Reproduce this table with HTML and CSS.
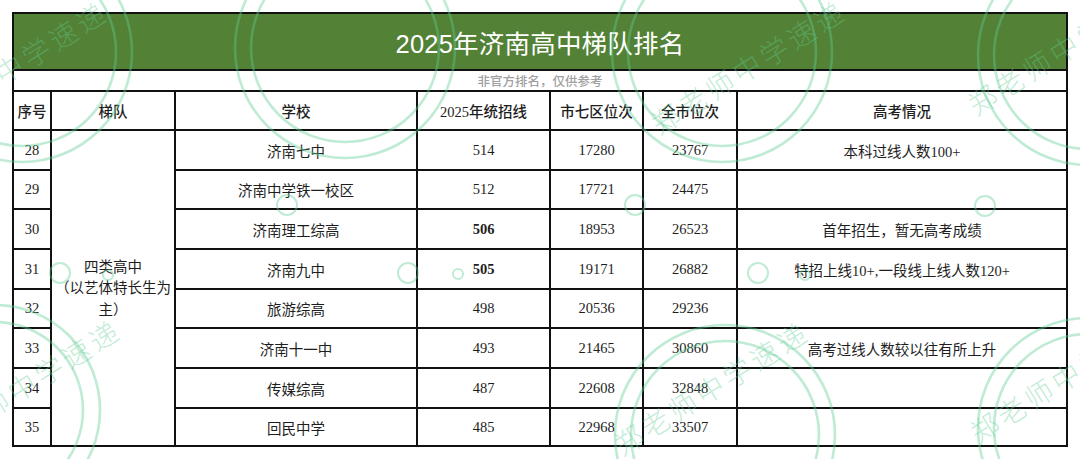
FILE: index.html
```html
<!DOCTYPE html>
<html lang="zh-CN">
<head>
<meta charset="utf-8">
<title>2025年济南高中梯队排名</title>
<link rel="stylesheet" href="styles.css">
</head>
<body>
<div class="page">
  <div class="sheet">
    <div class="title">2025年济南高中梯队排名</div>
    <div class="note">非官方排名，仅供参考</div>

    <div class="cell head">序号</div>
    <div class="cell head">梯队</div>
    <div class="cell head">学校</div>
    <div class="cell head">2025年统招线</div>
    <div class="cell head">市七区位次</div>
    <div class="cell head">全市位次</div>
    <div class="cell head">高考情况</div>

    <div class="cell">28</div>
    <div class="cell tier">四类高中<br>（以艺体特长生为主）</div>
    <div class="cell">济南七中</div>
    <div class="cell">514</div>
    <div class="cell">17280</div>
    <div class="cell">23767</div>
    <div class="cell">本科过线人数100+</div>

    <div class="cell">29</div>
    <div class="cell">济南中学铁一校区</div>
    <div class="cell">512</div>
    <div class="cell">17721</div>
    <div class="cell">24475</div>
    <div class="cell"></div>

    <div class="cell">30</div>
    <div class="cell">济南理工综高</div>
    <div class="cell strong">506</div>
    <div class="cell">18953</div>
    <div class="cell">26523</div>
    <div class="cell">首年招生，暂无高考成绩</div>

    <div class="cell">31</div>
    <div class="cell">济南九中</div>
    <div class="cell strong">505</div>
    <div class="cell">19171</div>
    <div class="cell">26882</div>
    <div class="cell">特招上线10+,一段线上线人数120+</div>

    <div class="cell">32</div>
    <div class="cell">旅游综高</div>
    <div class="cell">498</div>
    <div class="cell">20536</div>
    <div class="cell">29236</div>
    <div class="cell"></div>

    <div class="cell">33</div>
    <div class="cell">济南十一中</div>
    <div class="cell">493</div>
    <div class="cell">21465</div>
    <div class="cell">30860</div>
    <div class="cell">高考过线人数较以往有所上升</div>

    <div class="cell">34</div>
    <div class="cell">传媒综高</div>
    <div class="cell">487</div>
    <div class="cell">22608</div>
    <div class="cell">32848</div>
    <div class="cell"></div>

    <div class="cell">35</div>
    <div class="cell">回民中学</div>
    <div class="cell">485</div>
    <div class="cell">22968</div>
    <div class="cell">33507</div>
    <div class="cell"></div>
  </div>

  <svg class="watermark" width="1080" height="459" viewBox="0 0 1080 459" aria-hidden="true">
    <g class="rings">
      <circle cx="22" cy="52" r="110"/><circle cx="22" cy="52" r="94"/>
      <circle cx="345" cy="48" r="110"/><circle cx="345" cy="48" r="94"/>
      <circle cx="722" cy="52" r="110"/><circle cx="722" cy="52" r="94"/>
      <circle cx="1088" cy="55" r="110"/><circle cx="1088" cy="55" r="94"/>
      <circle cx="-5" cy="410" r="105"/><circle cx="-5" cy="410" r="88"/>
      <circle cx="725" cy="435" r="110"/><circle cx="725" cy="435" r="94"/>
      <circle cx="1088" cy="428" r="110"/><circle cx="1088" cy="428" r="94"/>
      <circle class="dot" cx="60" cy="273" r="10"/><circle class="dot" cx="108" cy="275" r="5"/>
      <circle class="dot" cx="408" cy="273" r="10"/><circle class="dot" cx="458" cy="274" r="5"/>
      <circle class="dot" cx="758" cy="273" r="10"/><circle class="dot" cx="805" cy="275" r="5"/>
      <circle class="dot" cx="287" cy="205" r="10"/>
      <circle class="dot" cx="635" cy="205" r="10"/>
      <circle class="dot" cx="985" cy="206" r="10"/>
    </g>
    <g class="marks">
      <text transform="translate(10 67) rotate(-32)">郑老师中学速递</text>
      <text transform="translate(748 66) rotate(-32)">郑老师中学速递</text>
      <text transform="translate(1065 47) rotate(-32)">郑老师中学速递</text>
      <text transform="translate(23 385) rotate(-32)">郑老师中学速递</text>
      <text transform="translate(711 387) rotate(-32)">郑老师中学速递</text>
      <text transform="translate(1067 375) rotate(-32)">郑老师中学速递</text>
    </g>
  </svg>
</div>
</body>
</html>
```

FILE: styles.css
```css
html, body {
  margin: 0;
  padding: 0;
  background: #fff;
}

.page {
  position: relative;
  width: 1080px;
  height: 459px;
  box-sizing: border-box;
  padding: 12px 0 0 12px;
  overflow: hidden;
  font-family: "Liberation Serif", "Noto Sans CJK SC", serif;
  color: #1e1e1e;
}

.sheet {
  display: grid;
  width: max-content;
  grid-template-columns: 36px 122px 240px 131px 91px 92px 328px;
  grid-template-rows: 55px 19px 37px 38px 37px 38px 38px 37px 38px 38px 36px;
  gap: 2px;
  padding: 2px;
  background: #111;
}

.title {
  grid-column: 1 / -1;
  background: #538135;
  color: #fff;
  display: flex;
  align-items: center;
  justify-content: center;
  font-family: "Liberation Sans", "Noto Sans CJK SC", sans-serif;
  font-size: 25.5px;
  letter-spacing: 0.2px;
}

.note {
  grid-column: 1 / -1;
  background: #fff;
  color: #a0a0a0;
  display: flex;
  align-items: center;
  justify-content: center;
  font-family: "Noto Sans CJK SC", sans-serif;
  font-size: 12.5px;
  font-weight: 500;
}

.cell {
  background: #fff;
  display: flex;
  align-items: center;
  justify-content: center;
  text-align: center;
  font-size: 14.5px;
  white-space: nowrap;
}

.head {
  font-weight: 500;
}

.strong {
  font-weight: bold;
}

.tier {
  grid-row: span 8;
  white-space: normal;
  line-height: 21.5px;
  padding-top: 2px;
}

.watermark {
  position: absolute;
  top: 0;
  left: 0;
  pointer-events: none;
}

.rings circle {
  fill: none;
  stroke: rgba(96, 205, 148, 0.4);
  stroke-width: 2.6;
}

.rings .dot {
  stroke-width: 2;
}

.marks text {
  fill: rgba(96, 205, 148, 0.4);
  font-family: "Noto Sans CJK SC", sans-serif;
  font-weight: 300;
  font-size: 28px;
  letter-spacing: 4px;
  text-anchor: middle;
  dominant-baseline: central;
}
```
